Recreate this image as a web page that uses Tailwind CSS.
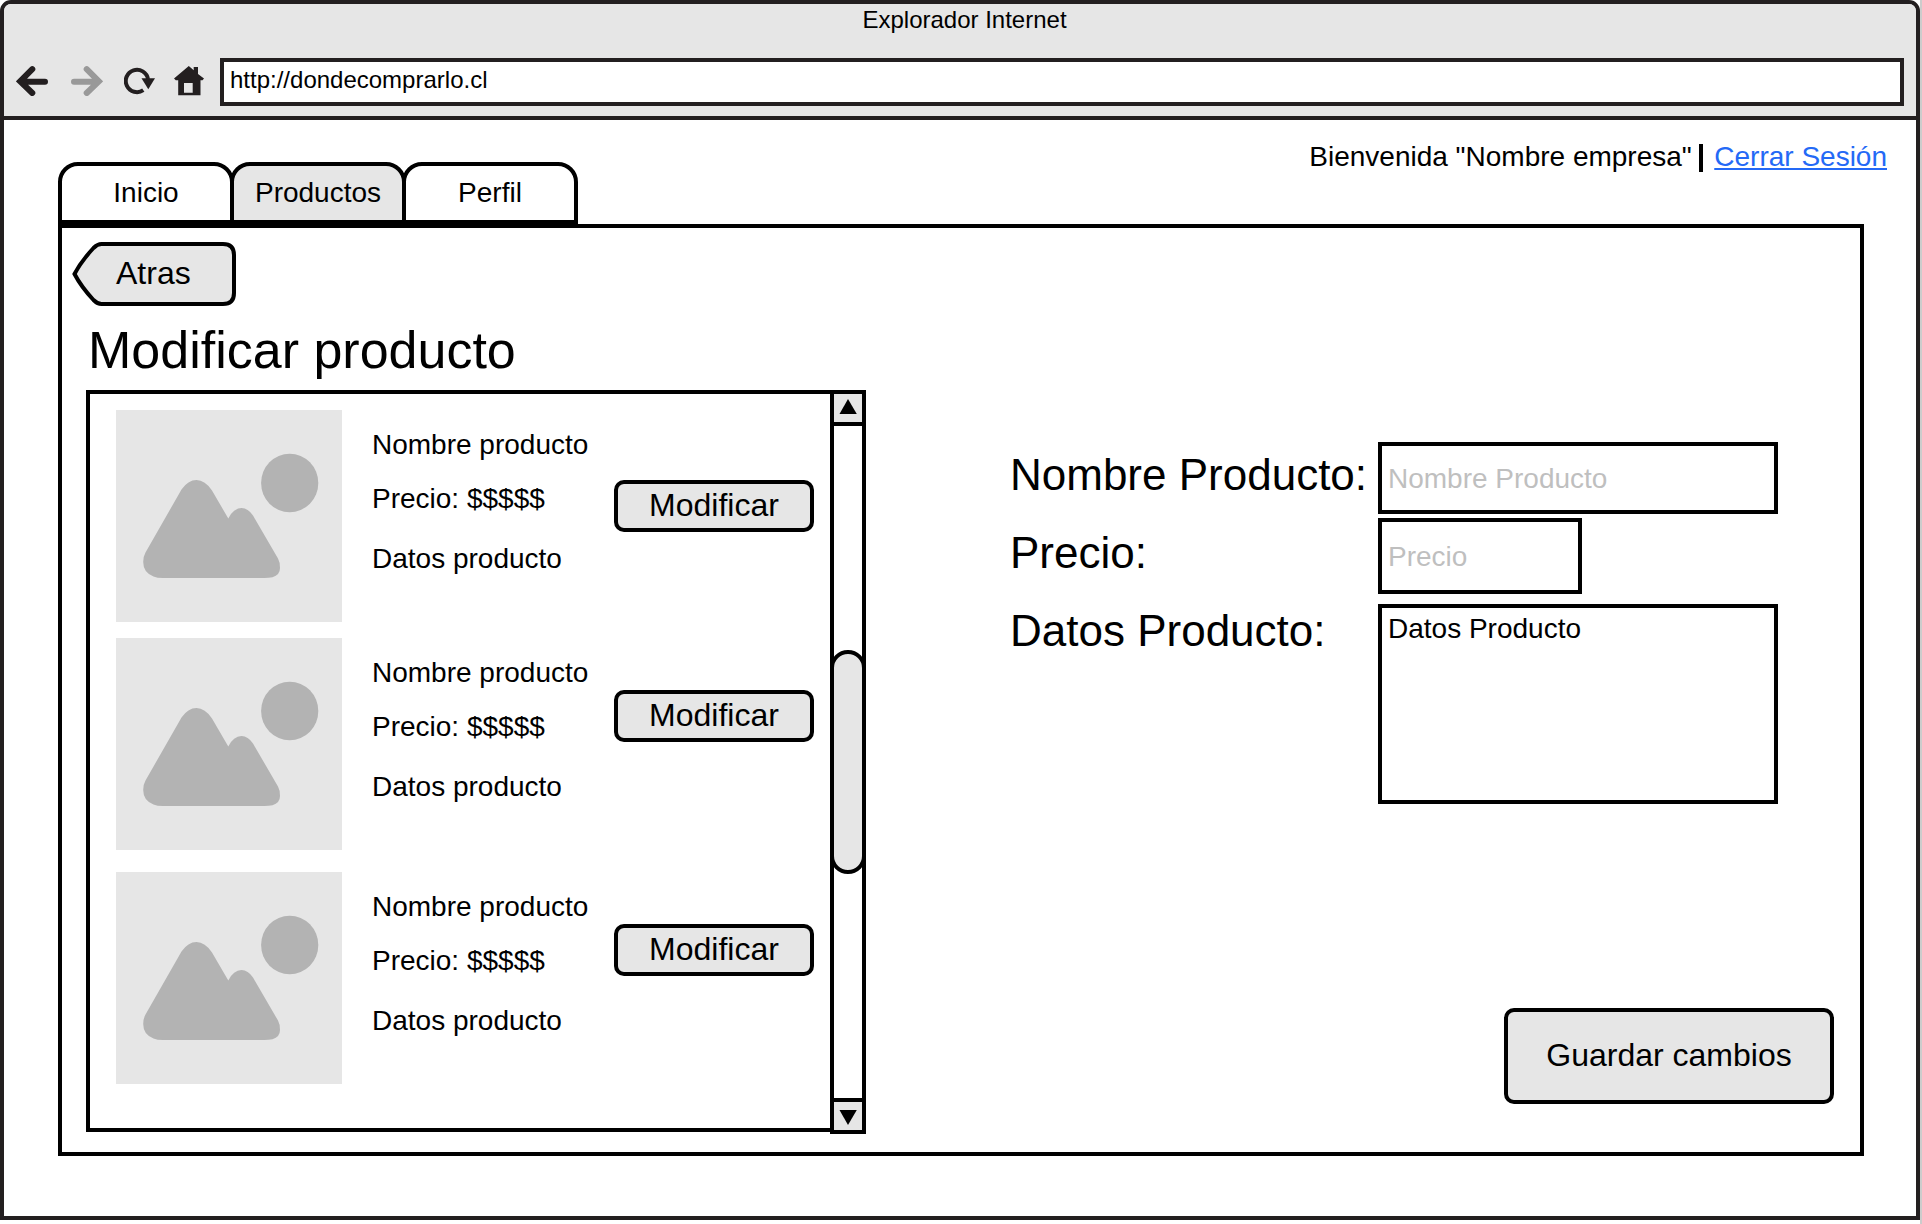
<!DOCTYPE html>
<html lang="es">
<head>
<meta charset="utf-8">
<title>Explorador Internet</title>
<script src="https://cdn.jsdelivr.net/npm/@tailwindcss/browser@4"></script>
</head>
<body class="flex h-[1224px] w-[1922px] overflow-hidden bg-white font-['Liberation_Sans',Arial,sans-serif] text-[28px] leading-[31px] text-black">

<svg class="hidden">
  <symbol id="picture" viewBox="0 0 226 212">
    <rect width="226" height="212" fill="#e6e6e6"/>
    <ellipse cx="173.7" cy="73" rx="28.6" ry="29.2" fill="#b3b3b3"/>
    <path d="M65.500 79.500Q72 70 80.500 70Q89 70 96 80.500L112.300 108.500Q117.500 98 125.500 98Q132 98 137 105.500L162 148.500Q164 152 164 158Q164 165 156.500 167.200Q153 168 148 168H47Q41 168 37.500 166.500Q27.200 162.500 27.200 152Q27.200 146.500 29.500 142.500Z" fill="#b3b3b3"/>
  </symbol>
</svg>

<div class="flex h-[1220px] w-[1920px] flex-col overflow-hidden rounded-t-[11px] border-4 border-[#231f20]">
  <header class="h-[116px] shrink-0 border-b-4 border-[#231f20] bg-[#e6e6e6] pt-[2px]">
    <h1 class="pl-[9px] text-center text-[24px] leading-[27px]">Explorador Internet</h1>
    <div class="mt-[25px] flex pl-3 pr-3">
      <svg class="mt-2 h-[30px] w-8" viewBox="0 0 32 30" fill="none" stroke="#231f20" stroke-width="6" stroke-linecap="round"><path d="M16.300 3.200L4.200 15.400L16.300 27M5 15.700H29"/></svg>
      <svg class="ml-[23px] mt-2 h-[30px] w-8" viewBox="0 0 32 30" fill="none" stroke="#999999" stroke-width="6" stroke-linecap="round"><path d="M15.700 3.200L27.800 15.400L15.700 27M27 15.700H3"/></svg>
      <svg class="ml-[21px] mt-2 h-[30px] w-[31px]" viewBox="0 0 31 30"><path d="M19.300 24.200A11.200 11.200 0 1 1 24 13" fill="none" stroke="#231f20" stroke-width="4"/><path d="M17.500 12.300H31L24.300 23.200Z" fill="#231f20"/></svg>
      <svg class="ml-[19px] mt-2 h-[30px] w-[30px]" viewBox="0 0 30 30"><path d="M14.800 0L19.700 4.200V1H24V8L30 12.500L28.500 14.300H26.500V29.300H4.200V14.300H1.800L0 12.500Z" fill="#231f20"/><path d="M10 17h8.700v9.700H10z" fill="#e6e6e6"/></svg>
      <div class="ml-4 h-12 flex-1 border-4 border-[#231f20] bg-white pl-[6px] pt-[4px] text-[24px] leading-[27px]">http://dondecomprarlo.cl</div>
    </div>
  </header>

  <main class="flex-1 pt-[21px]">
    <div class="flex h-[83px] items-start pl-[54px] pr-[29px]">
      <nav class="mt-[21px] flex text-center">
        <a class="h-[62px] w-[176px] rounded-t-[20px] border-4 border-black pt-[11px]">Inicio</a>
        <a class="-ml-1 h-[62px] w-[176px] rounded-t-[20px] border-4 border-black bg-[#e6e6e6] pt-[11px]">Productos</a>
        <a class="-ml-1 h-[62px] w-[176px] rounded-t-[20px] border-4 border-black pt-[11px]">Perfil</a>
      </nav>
      <div class="ml-auto flex whitespace-nowrap">
        <span class="w-[390px]">Bienvenida "Nombre empresa"</span>
        <span class="mt-[3px] h-[28px] w-1 bg-black"></span>
        <a class="ml-[11px] text-[#2469f6] underline decoration-2 underline-offset-[2px]">Cerrar Sesión</a>
      </div>
    </div>

    <section class="ml-[54px] h-[932px] w-[1806px] border-4 border-black pt-[14px]">
      <button class="relative ml-[10px] block h-16 w-[164px]">
        <svg class="absolute left-0 top-0 h-16 w-[164px]" viewBox="0 0 164 64"><path d="M2.500 32C7.500 22.500 15 13 21.500 6Q25.500 2 29.500 2H151Q162 2 162 13V51Q162 62 151 62H29.500Q25.500 62 21.500 58C15 51 7.500 41.500 2.500 32Z" fill="#e6e6e6" stroke="#000" stroke-width="4"/></svg>
        <span class="relative -mt-[2px] block pl-[44px] text-left text-[32px] leading-[36px]">Atras</span>
      </button>
      <h2 class="mt-[15px] pl-[26px] text-[52px] leading-[58px]">Modificar producto</h2>

      <div class="mt-[11px] flex items-start pl-6">
        <div class="h-[742px] w-[744px] border-4 border-r-0 border-black pl-[26px] pt-4">
          <article class="flex h-[212px]">
            <svg class="h-[212px] w-[226px]"><use href="#picture"/></svg>
            <div class="ml-[30px] w-[242px] pt-[19px]"><p>Nombre producto</p><p class="mt-[23px]">Precio: $$$$$</p><p class="mt-[29px]">Datos producto</p></div>
            <button class="mt-[70px] h-[52px] w-[200px] rounded-[10px] border-4 border-black bg-[#e6e6e6] pb-[2px] text-[32px] leading-[36px]">Modificar</button>
          </article>
          <article class="mt-4 flex h-[212px]">
            <svg class="h-[212px] w-[226px]"><use href="#picture"/></svg>
            <div class="ml-[30px] w-[242px] pt-[19px]"><p>Nombre producto</p><p class="mt-[23px]">Precio: $$$$$</p><p class="mt-[29px]">Datos producto</p></div>
            <button class="mt-[52px] h-[52px] w-[200px] rounded-[10px] border-4 border-black bg-[#e6e6e6] pb-[2px] text-[32px] leading-[36px]">Modificar</button>
          </article>
          <article class="mt-[22px] flex h-[212px]">
            <svg class="h-[212px] w-[226px]"><use href="#picture"/></svg>
            <div class="ml-[30px] w-[242px] pt-[19px]"><p>Nombre producto</p><p class="mt-[23px]">Precio: $$$$$</p><p class="mt-[29px]">Datos producto</p></div>
            <button class="mt-[52px] h-[52px] w-[200px] rounded-[10px] border-4 border-black bg-[#e6e6e6] pb-[2px] text-[32px] leading-[36px]">Modificar</button>
          </article>
        </div>
        <div class="flex h-[744px] w-9 flex-col border-4 border-black">
          <div class="h-8 border-b-4 border-black bg-[#e6e6e6]"><svg class="h-7 w-7" viewBox="0 0 28 28"><path d="M14 5L22.800 20H5.500Z"/></svg></div>
          <div class="flex-1 pt-[224px]"><div class="-mx-1 h-56 rounded-[18px] border-4 border-black bg-[#e6e6e6]"></div></div>
          <div class="h-8 border-t-4 border-black bg-[#e6e6e6]"><svg class="h-7 w-7" viewBox="0 0 28 28"><path d="M14 23L22.800 8H5.500Z"/></svg></div>
        </div>

        <form class="ml-[144px] mt-[52px] flex w-[824px] flex-col">
          <div class="flex">
            <label class="w-[368px] whitespace-nowrap pt-2 text-[44px] leading-[49px]">Nombre Producto:</label>
            <input class="h-[72px] w-[400px] border-4 border-black pl-[6px] pt-px placeholder:text-[#bfbfbf]" placeholder="Nombre Producto">
          </div>
          <div class="mt-1 flex">
            <label class="w-[368px] pt-[10px] text-[44px] leading-[49px]">Precio:</label>
            <input class="h-[76px] w-[204px] border-4 border-black pl-[6px] pt-px placeholder:text-[#bfbfbf]" placeholder="Precio">
          </div>
          <div class="mt-[10px] flex">
            <label class="w-[368px] pt-[2px] text-[44px] leading-[49px]">Datos Producto:</label>
            <textarea class="h-[200px] w-[400px] resize-none border-4 border-black pl-[6px] pt-[5px]">Datos Producto</textarea>
          </div>
          <button type="button" class="mt-[204px] h-24 w-[330px] self-end rounded-[10px] border-4 border-black bg-[#e6e6e6] pb-[2px] text-[32px] leading-[36px]">Guardar cambios</button>
        </form>
      </div>
    </section>
  </main>
</div>
<div class="w-[2px] bg-[#cccccc]"></div>
</body>
</html>
